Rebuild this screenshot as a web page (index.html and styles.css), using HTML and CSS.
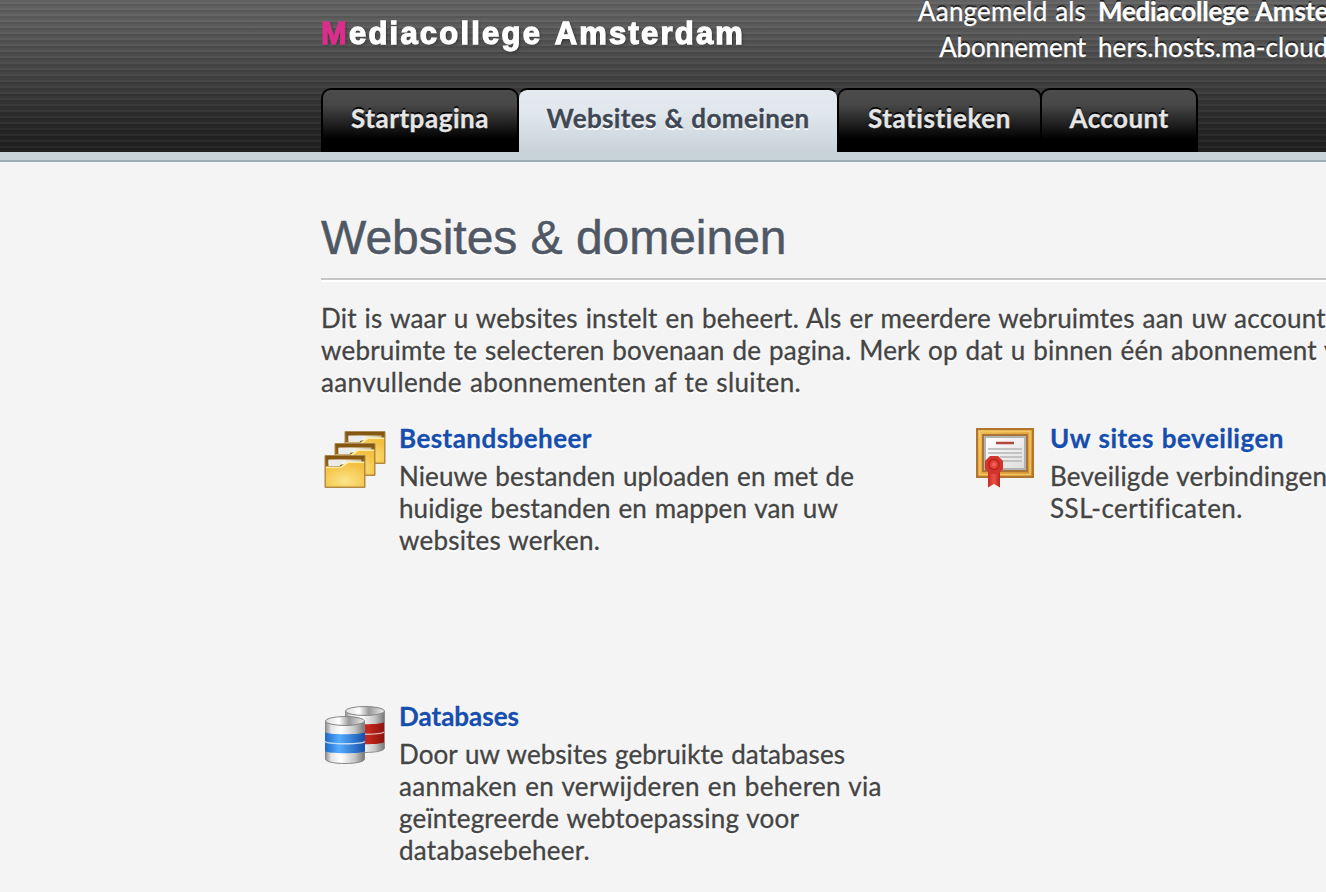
FILE: index.html
```
<!DOCTYPE html>
<html lang="nl">
<head>
<meta charset="utf-8">
<title>Websites &amp; domeinen</title>
<link rel="stylesheet" href="styles.css">
</head>
<body>
<div class="page">
<header class="header">
  <div class="top">
    <div class="logo"><span class="logo-m">M</span>ediacollege Amsterdam</div>
    <div class="session">
      <span class="label">Aangemeld als</span><b class="user">Mediacollege Amste</b>
      <span class="label sub">Abonnement</span><span class="host">hers.hosts.ma-cloud</span>
    </div>
  </div>
  <nav class="tabs">
    <a class="tab tab-home">Startpagina</a>
    <a class="tab tab-sites active">Websites &amp; domeinen</a>
    <a class="tab tab-stats">Statistieken</a>
    <a class="tab tab-account">Account</a>
  </nav>
</header>
<main class="main">
  <h1>Websites &amp; domeinen</h1>
  <p class="intro">
    <span class="line i1">Dit is waar u websites instelt en beheert. Als er meerdere webruimtes aan uw account</span>
    <span class="line i2">webruimte te selecteren bovenaan de pagina. Merk op dat u binnen één abonnement v</span>
    <span class="line i3">aanvullende abonnementen af te sluiten.</span>
  </p>
  <div class="grid">
    <section class="item">
      <svg class="icon" viewBox="0 0 64 64">
        <defs>
          <linearGradient id="back" x2="0" y2="1"><stop offset="0" stop-color="#81530e"/><stop offset="1" stop-color="#b98a36"/></linearGradient>
          <radialGradient id="front" cx=".5" cy=".75" r=".7"><stop offset="0" stop-color="#fbe48a"/><stop offset="1" stop-color="#f3c03f"/></radialGradient>
          <linearGradient id="paper"><stop offset="0" stop-color="#d5d5d5"/><stop offset=".35" stop-color="#fff"/><stop offset="1" stop-color="#c4b99b"/></linearGradient>
          <g id="folder">
            <path d="M.5.5h40v32H.5z" fill="url(#back)" stroke="#a98a50"/>
            <path d="M4 4.500h33v5H4z" fill="url(#paper)"/>
            <path d="M4 5h16l-5 6H4z" fill="#ebebeb"/>
            <path d="M1 12h15l7-5h17v25H1z" fill="url(#front)"/>
            <path d="M1.500 12.300h15l7-5H40" fill="none" stroke="#fff0b4" stroke-width="1.500"/>
            <path d="M1 11v21h39V7" fill="none" stroke="#b98a37"/>
          </g>
        </defs>
        <use href="#folder" x="22.500" y="3"/><use href="#folder" x="12.500" y="15"/><use href="#folder" x="2.500" y="27"/>
      </svg>
      <div class="text">
        <a class="title t-files">Bestandsbeheer</a>
        <span class="line f1">Nieuwe bestanden uploaden en met de</span>
        <span class="line f2">huidige bestanden en mappen van uw</span>
        <span class="line f3">websites werken.</span>
      </div>
    </section>
    <section class="item">
      <svg class="icon" viewBox="0 0 64 64">
        <defs><linearGradient id="gold" x2="1" y2="1"><stop offset="0" stop-color="#efbd57"/><stop offset=".5" stop-color="#e3a53c"/><stop offset="1" stop-color="#cf9033"/></linearGradient>
        <linearGradient id="sheet" x2="1" y2="1"><stop offset="0" stop-color="#fff"/><stop offset="1" stop-color="#ddd"/></linearGradient>
        <linearGradient id="ribbon"><stop offset="0" stop-color="#cc2921"/><stop offset=".5" stop-color="#ec5147"/><stop offset="1" stop-color="#b9231c"/></linearGradient></defs>
        <path d="M4 1h56v48H4z" fill="url(#gold)" stroke="#b0762f" stroke-width="2"/>
        <path d="M7 3.500h50v43H7z" fill="none" stroke="#f3c666" stroke-width="1.500"/>
        <path d="M10 7h44v36H10z" fill="#c8c8c8" stroke="#a87439" stroke-width="2"/>
        <path d="M12 9h40v32H12z" fill="url(#sheet)" stroke="#b3b3b3" stroke-width="2"/>
        <path d="M23 15h18" stroke="#b3473f" stroke-width="2.500"/>
        <path d="M15 21h34M15 25h34M27 29h22M29 33h20" stroke="#c3c3c3" stroke-width="2"/>
        <path d="M15 40h12v19.500l-6-3.500-6 3.500z" fill="url(#ribbon)"/>
        <path d="M17 28h8l5 5v8l-5 5h-8l-5-5v-8z" fill="#d3352d"/>
        <circle cx="21" cy="36.500" r="5" fill="#e5443b" stroke="#b8211c" stroke-width="1.500"/>
        <circle cx="21" cy="36.500" r="2" fill="#ef625a"/>
      </svg>
      <div class="text">
        <a class="title t-secure">Uw sites beveiligen</a>
        <span class="line s1">Beveiligde verbindingen</span>
        <span class="line s2">SSL-certificaten.</span>
      </div>
    </section>
    <section class="item">
      <svg class="icon" viewBox="0 0 64 64">
        <defs>
          <linearGradient id="metal"><stop offset="0" stop-color="#909090"/><stop offset=".15" stop-color="#e5e5e5"/><stop offset=".4" stop-color="#fff"/><stop offset=".75" stop-color="#c6c6c6"/><stop offset="1" stop-color="#777"/></linearGradient>
          <linearGradient id="blue"><stop offset="0" stop-color="#1d68c8"/><stop offset=".35" stop-color="#55adff"/><stop offset="1" stop-color="#1550a8"/></linearGradient>
          <linearGradient id="red"><stop offset="0" stop-color="#d23a30"/><stop offset=".6" stop-color="#c3271f"/><stop offset="1" stop-color="#8e120c"/></linearGradient>
          <linearGradient id="lid"><stop offset="0" stop-color="#ddd"/><stop offset=".35" stop-color="#fff"/><stop offset=".6" stop-color="#999"/><stop offset="1" stop-color="#eee"/></linearGradient>
        </defs>
        <g>
          <path d="M23.500 5v37c0 6 39 6 39 0V5z" fill="url(#metal)" stroke="#909090"/>
          <path d="M23 16c0 3 39 3 39 0v20c0 3-39 3-39 0z" fill="url(#red)"/>
          <path d="M23 26c3 3 36 3 39 0" stroke="#dcaaa7" stroke-width="1.500" fill="none"/>
          <ellipse cx="43" cy="5" rx="19.500" ry="4.500" fill="url(#lid)" stroke="#858585"/>
        </g>
        <g>
          <path d="M3.500 15v38c0 6 39 6 39 0V15z" fill="url(#metal)" stroke="#858585"/>
          <path d="M3 26c0 3 40 3 40 0v19c0 3-40 3-40 0z" fill="url(#blue)"/>
          <path d="M3 35.500c3 3 37 3 40 0" stroke="#c3dcf6" stroke-width="1.500" fill="none"/>
          <ellipse cx="23" cy="15" rx="19.500" ry="4.500" fill="url(#lid)" stroke="#858585"/>
        </g>
      </svg>
      <div class="text">
        <a class="title t-db">Databases</a>
        <span class="line d1">Door uw websites gebruikte databases</span>
        <span class="line d2">aanmaken en verwijderen en beheren via</span>
        <span class="line d3">geïntegreerde webtoepassing voor</span>
        <span class="line d4">databasebeheer.</span>
      </div>
    </section>
  </div>
</main>
</div>
</body>
</html>
```
FILE: styles.css
```
* { box-sizing: border-box; }
body { margin: 0; background: #f4f4f4; color: #444; font: 26px/32px Lato, "Noto Sans", sans-serif; word-spacing: 1px; -webkit-text-stroke: .3px; }
.page { height: 892px; overflow: hidden; }
.header {
  display: flex; flex-direction: column; justify-content: space-between;
  height: 162px; padding-left: 321px; border-bottom: 2px solid #9eacb5;
  background:
    linear-gradient(#c8d3d9, #c8d3d9) 0 152px / 100% 8px no-repeat,
    repeating-linear-gradient(rgba(0,0,0,.02) 0 2px, rgba(255,255,255,.035) 2px 4px, rgba(0,0,0,.09) 4px 6px),
    linear-gradient(#636363 0, #5f5f5f 20px, #414141 80px, #252525 130px, #202020 152px);
}
.top { display: flex; white-space: nowrap; }
.logo {
  flex: none; width: 597px; padding-top: 18px; color: #fff;
  font: bold 31px/32px "Liberation Sans", Arial, sans-serif;
  letter-spacing: 2.2px; word-spacing: 3px; -webkit-text-stroke: 1.3px;
  text-shadow: 1px 1px 3px rgba(0,0,0,.5);
  filter: blur(.6px);
}
.logo-m { color: #d92f8b; }
.session { flex: none; display: grid; grid-template-columns: 168px auto; column-gap: 12px; grid-auto-rows: 36px; margin-top: -5px; color: #fff; text-shadow: 0 -2px 0 #222; }
.label { text-align: right; letter-spacing: .16px; }
.sub { letter-spacing: -.15px; }
.user { letter-spacing: -.26px; }
.host { letter-spacing: .1px; }
.tabs { display: flex; height: 72px; padding-bottom: 8px; }
.tab {
  height: 64px; padding-top: 12px; text-align: center; font-weight: 700;
  border: 2px solid #000; border-bottom: 0; border-radius: 10px 10px 0 0;
  background: linear-gradient(#4c4c4c 0, #474747 15px, #000 49px);
  color: #e6e6e6; text-shadow: 0 -2px 0 #000;
}
.tab + .tab { margin-left: -2px; }
.tab-home { width: 198px; letter-spacing: .537px; }
.tab-sites { width: 322px; letter-spacing: .37px; }
.tab-stats { width: 205px; letter-spacing: .59px; }
.tab-account { width: 158px; letter-spacing: .42px; }
.active {
  position: relative; border-color: #000 transparent; color: #404754; text-shadow: 0 2px 0 #fff;
  background: linear-gradient(#e4eaf0 0, #dfe6ec 25px, #c8d3d9 62px) padding-box;
}
.main { padding: 48px 0 0 321px; text-shadow: 0 2px 0 #fff; }
h1 { margin: 0; height: 70px; border-bottom: 2px solid #c5c5c5; box-shadow: 0 2px 0 #fff; color: #4f5864; font: 48px/56px "Liberation Sans", Arial, sans-serif; word-spacing: 0; letter-spacing: -.03px; -webkit-text-stroke: .5px; }
.intro { margin: 22px 0 24px; }
.line { display: block; white-space: nowrap; }
.grid { display: grid; grid-template-columns: 651px 651px; grid-auto-rows: 278px; }
.item { display: flex; }
.icon { width: 64px; height: 64px; margin: 6px 13px 0 1px; filter: blur(.6px); }
.title { display: block; height: 38px; color: #164ead; font-weight: 700; white-space: nowrap; }
.i1 { letter-spacing: .22px; }
.i2 { letter-spacing: .21px; }
.i3 { letter-spacing: .375px; }
.t-files { letter-spacing: .448px; }
.f1 { letter-spacing: .087px; }
.f2 { letter-spacing: .11px; }
.f3 { letter-spacing: .21px; }
.t-secure { letter-spacing: .51px; }
.s1 { letter-spacing: .2px; }
.s2 { letter-spacing: .503px; }
.d1 { letter-spacing: .055px; }
.d2 { letter-spacing: .346px; }
.d3 { letter-spacing: .18px; }
.d4 { letter-spacing: .276px; }
```
